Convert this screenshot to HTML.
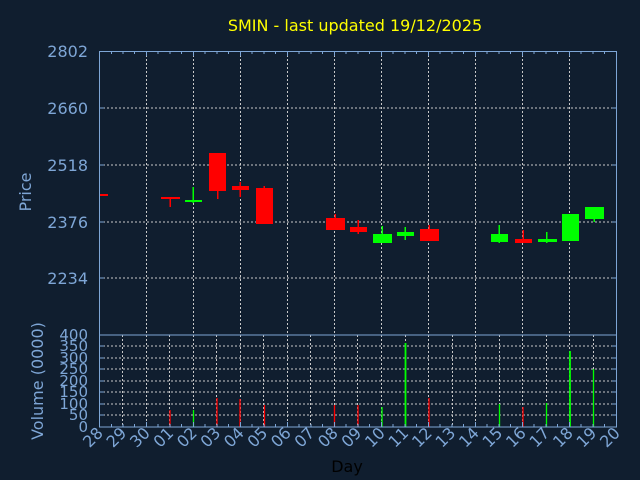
<!DOCTYPE html>
<html><head><meta charset="utf-8"><style>
html,body{margin:0;padding:0;background:#101e2f;}
svg{display:block;font-family:"DejaVu Sans","Liberation Sans",sans-serif;}
</style></head><body>
<svg width="640" height="480" viewBox="0 0 640 480" xmlns="http://www.w3.org/2000/svg">
<rect width="640" height="480" fill="#101e2f"/>
<text x="355" y="31" fill="#ffff00" font-size="16" text-anchor="middle">SMIN - last updated 19/12/2025</text>
<!-- price grid -->
<g stroke="#c8c8c8" stroke-width="1" stroke-dasharray="2,2">
<line x1="99" y1="108" x2="617" y2="108"/><line x1="99" y1="165" x2="617" y2="165"/>
<line x1="99" y1="222" x2="617" y2="222"/><line x1="99" y1="278" x2="617" y2="278"/>
<line x1="146.5" y1="51" x2="146.5" y2="335"/><line x1="193.5" y1="51" x2="193.5" y2="335"/>
<line x1="240.5" y1="51" x2="240.5" y2="335"/><line x1="287.5" y1="51" x2="287.5" y2="335"/>
<line x1="334.5" y1="51" x2="334.5" y2="335"/><line x1="381.5" y1="51" x2="381.5" y2="335"/>
<line x1="428.5" y1="51" x2="428.5" y2="335"/><line x1="475.5" y1="51" x2="475.5" y2="335"/>
<line x1="522.5" y1="51" x2="522.5" y2="335"/><line x1="569.5" y1="51" x2="569.5" y2="335"/>
<!-- volume grid -->
<line x1="99" y1="346" x2="617" y2="346"/><line x1="99" y1="358" x2="617" y2="358"/>
<line x1="99" y1="369" x2="617" y2="369"/><line x1="99" y1="381" x2="617" y2="381"/>
<line x1="99" y1="392" x2="617" y2="392"/><line x1="99" y1="404" x2="617" y2="404"/>
<line x1="99" y1="415" x2="617" y2="415"/>
<line x1="122.5" y1="335" x2="122.5" y2="427"/><line x1="146.5" y1="335" x2="146.5" y2="427"/>
<line x1="169.5" y1="335" x2="169.5" y2="427"/><line x1="193.5" y1="335" x2="193.5" y2="427"/>
<line x1="216.5" y1="335" x2="216.5" y2="427"/><line x1="240.5" y1="335" x2="240.5" y2="427"/>
<line x1="263.5" y1="335" x2="263.5" y2="427"/><line x1="287.5" y1="335" x2="287.5" y2="427"/>
<line x1="310.5" y1="335" x2="310.5" y2="427"/><line x1="334.5" y1="335" x2="334.5" y2="427"/>
<line x1="357.5" y1="335" x2="357.5" y2="427"/><line x1="381.5" y1="335" x2="381.5" y2="427"/>
<line x1="405.5" y1="335" x2="405.5" y2="427"/><line x1="428.5" y1="335" x2="428.5" y2="427"/>
<line x1="452.5" y1="335" x2="452.5" y2="427"/><line x1="475.5" y1="335" x2="475.5" y2="427"/>
<line x1="499.5" y1="335" x2="499.5" y2="427"/><line x1="522.5" y1="335" x2="522.5" y2="427"/>
<line x1="546.5" y1="335" x2="546.5" y2="427"/><line x1="569.5" y1="335" x2="569.5" y2="427"/>
<line x1="593.5" y1="335" x2="593.5" y2="427"/>
</g>
<!-- candles -->
<g fill="#ff0000">
<rect x="99" y="194" width="9" height="2"/>
<rect x="161" y="197" width="19" height="2"/><rect x="169.5" y="197" width="1.5" height="10"/>
<rect x="209" y="153" width="17" height="38"/><rect x="217" y="153" width="1.5" height="46"/>
<rect x="232" y="186" width="17" height="4"/><rect x="239.5" y="182" width="1.5" height="15"/>
<rect x="256" y="188" width="17" height="36"/><rect x="263.5" y="186" width="1.5" height="4"/>
<rect x="326" y="218" width="19" height="12"/><rect x="334.5" y="214" width="1.5" height="5"/>
<rect x="350" y="227" width="17" height="5"/><rect x="357.5" y="220" width="1.5" height="14"/>
<rect x="420" y="229" width="19" height="12"/><rect x="428.5" y="225" width="1.5" height="5"/>
<rect x="515" y="239" width="17" height="4"/><rect x="522.5" y="230" width="1.5" height="10"/>
</g>
<g fill="#00ff00">
<rect x="185" y="200" width="17" height="2"/><rect x="192.5" y="187" width="1.5" height="16"/>
<rect x="373" y="234" width="19" height="9"/><rect x="381.5" y="226" width="1.5" height="9"/>
<rect x="397" y="232" width="17" height="4"/><rect x="404.5" y="227" width="1.5" height="13"/>
<rect x="491" y="234" width="17" height="8"/><rect x="498.5" y="225" width="1.5" height="18"/>
<rect x="538" y="239" width="19" height="3"/><rect x="546" y="232" width="1.5" height="11"/>
<rect x="562" y="214" width="17" height="27"/>
<rect x="585" y="207" width="19" height="12"/><rect x="593.5" y="218" width="1.5" height="4"/>
</g>
<!-- volume bars -->
<g stroke-width="1.3">
<line x1="170" y1="410" x2="170" y2="427" stroke="#ff0000"/>
<line x1="193.5" y1="410" x2="193.5" y2="427" stroke="#00ff00"/>
<line x1="217" y1="398" x2="217" y2="427" stroke="#ff0000"/>
<line x1="240" y1="399" x2="240" y2="427" stroke="#ff0000"/>
<line x1="264.5" y1="405" x2="264.5" y2="427" stroke="#ff0000"/>
<line x1="334.5" y1="405" x2="334.5" y2="427" stroke="#ff0000"/>
<line x1="358" y1="405" x2="358" y2="427" stroke="#ff0000"/>
<line x1="382" y1="407" x2="382" y2="427" stroke="#00ff00"/>
<line x1="405.5" y1="343" x2="405.5" y2="427" stroke="#00ff00" stroke-width="1.8"/>
<line x1="429" y1="398" x2="429" y2="427" stroke="#ff0000"/>
<line x1="499.5" y1="404" x2="499.5" y2="427" stroke="#00ff00"/>
<line x1="523" y1="407" x2="523" y2="427" stroke="#ff0000"/>
<line x1="546.5" y1="403" x2="546.5" y2="427" stroke="#00ff00"/>
<line x1="570" y1="351" x2="570" y2="427" stroke="#00ff00" stroke-width="1.8"/>
<line x1="593.5" y1="369" x2="593.5" y2="427" stroke="#00ff00"/>
</g>
<!-- axes -->
<g stroke="#7ea6d6" fill="none" stroke-width="1">
<rect x="99.5" y="51.5" width="517" height="283.5"/>
<rect x="99.5" y="335" width="517" height="92"/>
<g stroke-width="1">
<line x1="99" y1="108" x2="104" y2="108"/><line x1="99" y1="165" x2="104" y2="165"/><line x1="99" y1="222" x2="104" y2="222"/><line x1="99" y1="278" x2="104" y2="278"/>
<line x1="612" y1="108" x2="617" y2="108"/><line x1="612" y1="165" x2="617" y2="165"/><line x1="612" y1="222" x2="617" y2="222"/><line x1="612" y1="278" x2="617" y2="278"/>
<line x1="99" y1="346" x2="104" y2="346"/><line x1="99" y1="358" x2="104" y2="358"/><line x1="99" y1="369" x2="104" y2="369"/><line x1="99" y1="381" x2="104" y2="381"/><line x1="99" y1="392" x2="104" y2="392"/><line x1="99" y1="404" x2="104" y2="404"/><line x1="99" y1="415" x2="104" y2="415"/>
<line x1="612" y1="346" x2="617" y2="346"/><line x1="612" y1="358" x2="617" y2="358"/><line x1="612" y1="369" x2="617" y2="369"/><line x1="612" y1="381" x2="617" y2="381"/><line x1="612" y1="392" x2="617" y2="392"/><line x1="612" y1="404" x2="617" y2="404"/><line x1="612" y1="415" x2="617" y2="415"/>
<path d="M111.5 51v3M123 51v3M134.5 51v3M146.5 51v5M158 51v3M170 51v3M181.5 51v3M193.5 51v5M205 51v3M217 51v3M228.5 51v3M240.5 51v5M252 51v3M264 51v3M275.5 51v3M287.5 51v5M299 51v3M311 51v3M322.5 51v3M334.5 51v5M346 51v3M358 51v3M369.5 51v3M381.5 51v5M393 51v3M405 51v3M416.5 51v3M428.5 51v5M440 51v3M452 51v3M463.5 51v3M475.5 51v5M487 51v3M499 51v3M510.5 51v3M522.5 51v5M534 51v3M546 51v3M557.5 51v3M569.5 51v5M581 51v3M593 51v3M604.5 51v3"/>
<path d="M111.5 427v-3M123 427v-3M134.5 427v-3M146.5 427v-5M158 427v-3M170 427v-3M181.5 427v-3M193.5 427v-5M205 427v-3M217 427v-3M228.5 427v-3M240.5 427v-5M252 427v-3M264 427v-3M275.5 427v-3M287.5 427v-5M299 427v-3M311 427v-3M322.5 427v-3M334.5 427v-5M346 427v-3M358 427v-3M369.5 427v-3M381.5 427v-5M393 427v-3M405 427v-3M416.5 427v-3M428.5 427v-5M440 427v-3M452 427v-3M463.5 427v-3M475.5 427v-5M487 427v-3M499 427v-3M510.5 427v-3M522.5 427v-5M534 427v-3M546 427v-3M557.5 427v-3M569.5 427v-5M581 427v-3M593 427v-3M604.5 427v-3"/>
</g>
</g>
<!-- labels -->
<g fill="#7ea6d6" font-size="16" text-anchor="end">
<text x="88" y="57">2802</text><text x="88" y="114">2660</text><text x="88" y="171">2518</text>
<text x="88" y="228">2376</text><text x="88" y="284">2234</text>
</g>
<g fill="#7ea6d6" font-size="15" text-anchor="end">
<text x="88" y="340">400</text><text x="88" y="351">350</text><text x="88" y="363">300</text>
<text x="88" y="374">250</text><text x="88" y="386">200</text><text x="88" y="397">150</text>
<text x="88" y="409">100</text><text x="88" y="420">50</text><text x="88" y="432">0</text>
</g>
<text transform="translate(31,192) rotate(-90)" fill="#7ea6d6" font-size="16" text-anchor="middle">Price</text>
<text transform="translate(43,381) rotate(-90)" fill="#7ea6d6" font-size="16" text-anchor="middle">Volume (0000)</text>
<g fill="#7ea6d6" font-size="16" text-anchor="end">
<text transform="translate(104,434) rotate(-45)">28</text>
<text transform="translate(127.5,434) rotate(-45)">29</text>
<text transform="translate(151,434) rotate(-45)">30</text>
<text transform="translate(174.5,434) rotate(-45)">01</text>
<text transform="translate(198,434) rotate(-45)">02</text>
<text transform="translate(221.5,434) rotate(-45)">03</text>
<text transform="translate(245,434) rotate(-45)">04</text>
<text transform="translate(268.5,434) rotate(-45)">05</text>
<text transform="translate(292,434) rotate(-45)">06</text>
<text transform="translate(315.5,434) rotate(-45)">07</text>
<text transform="translate(339,434) rotate(-45)">08</text>
<text transform="translate(362.5,434) rotate(-45)">09</text>
<text transform="translate(386,434) rotate(-45)">10</text>
<text transform="translate(409.5,434) rotate(-45)">11</text>
<text transform="translate(433,434) rotate(-45)">12</text>
<text transform="translate(456.5,434) rotate(-45)">13</text>
<text transform="translate(480,434) rotate(-45)">14</text>
<text transform="translate(503.5,434) rotate(-45)">15</text>
<text transform="translate(527,434) rotate(-45)">16</text>
<text transform="translate(550.5,434) rotate(-45)">17</text>
<text transform="translate(574,434) rotate(-45)">18</text>
<text transform="translate(597.5,434) rotate(-45)">19</text>
<text transform="translate(621,434) rotate(-45)">20</text>
</g>
<text x="347" y="472" fill="#000000" font-size="16" text-anchor="middle">Day</text>
</svg>
</body></html>
